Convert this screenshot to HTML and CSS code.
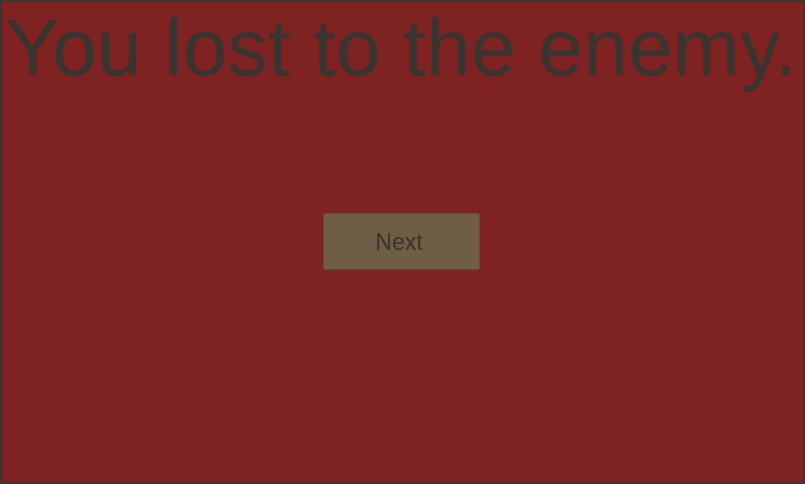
FILE: index.html
```html
<!DOCTYPE html>
<html>
<head>
<meta charset="utf-8">
<link rel="stylesheet" href="styles.css">
</head>
<body>
<div class="screen">
  <h1 class="title">You lost to the enemy.</h1>
  <button class="next">Next</button>
</div>
</body>
</html>
```
FILE: styles.css
```css
html, body {
  margin: 0;
  padding: 0;
  width: 805px;
  height: 484px;
  overflow: hidden;
  background: #3a3530;
}
.screen {
  box-sizing: border-box;
  width: 805px;
  height: 484px;
  border: 2px solid #3b3631;
  background: #7e2222;
  display: flex;
  flex-direction: column;
  align-items: center;
  font-family: "Liberation Sans", Arial, sans-serif;
}
.title {
  margin: 0 0 0 -2px;
  padding-top: 0;
  font-weight: normal;
  font-size: 80px;
  line-height: 91px;
  letter-spacing: 0.4px;
  color: #383432;
  white-space: nowrap;
}
.next {
  margin-top: 120px;
  margin-right: 3px;
  width: 157px;
  height: 57px;
  background: #6f5e45;
  border: 1px solid #5e4e3a;
  border-radius: 2px;
  color: #3a3530;
  font-family: "Liberation Sans", Arial, sans-serif;
  font-size: 23px;
  padding: 2px 4px 0 0;
}
```
